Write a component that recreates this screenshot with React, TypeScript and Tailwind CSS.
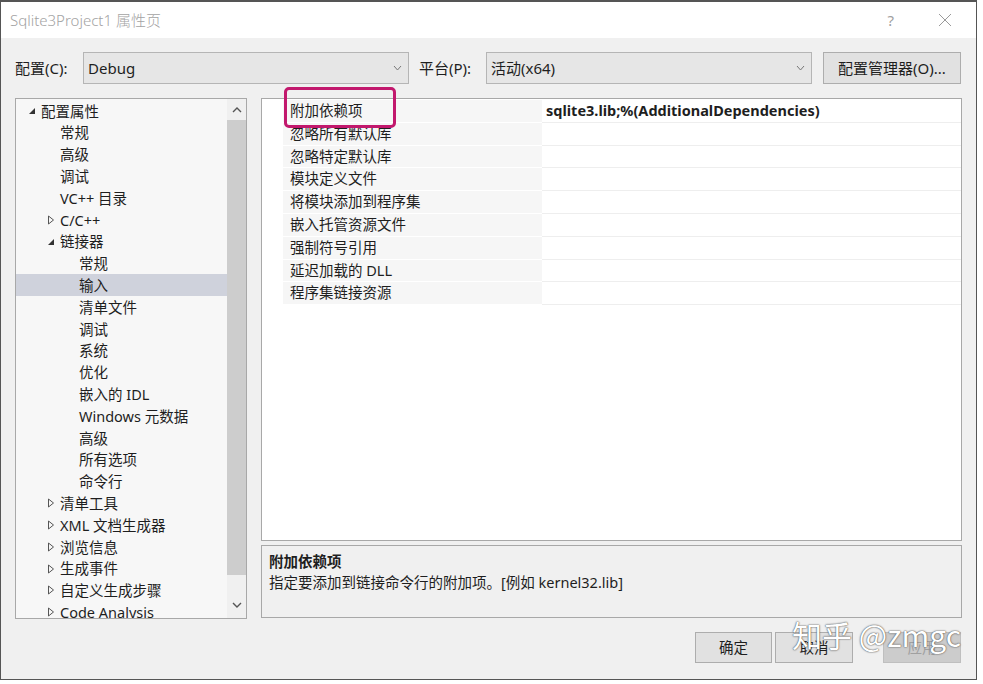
import React from "react";

const font = "font-['Segoe_UI','Noto_Sans','Noto_Sans_CJK_SC',sans-serif]";

type Node = { label: string; level: number; arrow?: "open" | "closed"; selected?: boolean };

const tree: Node[] = [
  { label: "配置属性", level: 0, arrow: "open" },
  { label: "常规", level: 1 },
  { label: "高级", level: 1 },
  { label: "调试", level: 1 },
  { label: "VC++ 目录", level: 1 },
  { label: "C/C++", level: 1, arrow: "closed" },
  { label: "链接器", level: 1, arrow: "open" },
  { label: "常规", level: 2 },
  { label: "输入", level: 2, selected: true },
  { label: "清单文件", level: 2 },
  { label: "调试", level: 2 },
  { label: "系统", level: 2 },
  { label: "优化", level: 2 },
  { label: "嵌入的 IDL", level: 2 },
  { label: "Windows 元数据", level: 2 },
  { label: "高级", level: 2 },
  { label: "所有选项", level: 2 },
  { label: "命令行", level: 2 },
  { label: "清单工具", level: 1, arrow: "closed" },
  { label: "XML 文档生成器", level: 1, arrow: "closed" },
  { label: "浏览信息", level: 1, arrow: "closed" },
  { label: "生成事件", level: 1, arrow: "closed" },
  { label: "自定义生成步骤", level: 1, arrow: "closed" },
  { label: "Code Analysis", level: 1, arrow: "closed" },
];

const props = [
  "附加依赖项",
  "忽略所有默认库",
  "忽略特定默认库",
  "模块定义文件",
  "将模块添加到程序集",
  "嵌入托管资源文件",
  "强制符号引用",
  "延迟加载的 DLL",
  "程序集链接资源",
];

const indent = ["pl-[12px]", "pl-[31px]", "pl-[50px]"];

function Arrow({ kind }: { kind?: "open" | "closed" }) {
  if (!kind) return <span className="w-[13px] shrink-0" />;
  return (
    <span className="w-[13px] shrink-0 flex items-center">
      {kind === "open" ? (
        <svg width="8" height="8" viewBox="0 0 8 8">
          <path d="M7 1 L7 7 L1 7 Z" fill="#333" />
        </svg>
      ) : (
        <svg width="8" height="10" viewBox="0 0 8 10">
          <path d="M1.5 1 L6.5 5 L1.5 9 Z" fill="none" stroke="#555" strokeWidth="1" />
        </svg>
      )}
    </span>
  );
}

function Chevron({ up }: { up?: boolean }) {
  return (
    <svg width="10" height="6" viewBox="0 0 10 6">
      <path d={up ? "M1 5 L5 1 L9 5" : "M1 1 L5 5 L9 1"} fill="none" stroke="#555" strokeWidth="1.4" />
    </svg>
  );
}

function Combo({ value, width }: { value: string; width: string }) {
  return (
    <div className={`${width} h-[32px] border border-[#b5b5b5] bg-[#e6e6e6] flex items-center justify-between pl-[4px] pr-[6px]`}>
      <span className="text-[15px] text-[#1e1e1e]">{value}</span>
      <svg width="9" height="6" viewBox="0 0 9 6">
        <path d="M1 1 L4.5 5 L8 1" fill="none" stroke="#777" strokeWidth="1" />
      </svg>
    </div>
  );
}

export default function App() {
  return (
    <div className={`w-[983px] h-[684px] bg-white relative overflow-hidden ${font}`}>
      <div className="w-[977px] h-[680px] border border-[#555] border-t-2 bg-[#f0f0f0] flex flex-col">
        {/* title bar */}
        <div className="h-[36px] bg-white flex items-center justify-between pl-[9px] pr-[24px] shrink-0">
          <span className="text-[15px] font-light text-[#a3a3a3]">Sqlite3Project1 属性页</span>
          <div className="flex items-center gap-[44px] text-[#a0a0a0]">
            <span className="text-[15px]">?</span>
            <svg width="14" height="14" viewBox="0 0 14 14">
              <path d="M1 1 L13 13 M13 1 L1 13" stroke="#9a9a9a" strokeWidth="1" />
            </svg>
          </div>
        </div>

        <div className="flex flex-col px-[14px]">
          {/* toolbar */}
          <div className="mt-[14px] h-[32px] flex items-center text-[15px] text-[#1e1e1e]">
            <span className="w-[68px]">配置(C):</span>
            <Combo value="Debug" width="w-[326px]" />
            <span className="ml-[10px] w-[67px]">平台(P):</span>
            <Combo value="活动(x64)" width="w-[326px]" />
            <button className="ml-[11px] w-[138px] h-[32px] border border-[#adadad] bg-[#e1e1e1] text-[15px] text-[#1e1e1e]">
              配置管理器(O)...
            </button>
          </div>

          {/* main */}
          <div className="mt-[14px] flex gap-[14px]">
            {/* tree */}
            <div className="w-[232px] h-[521px] border border-[#a8a8a8] bg-[#f7f7f7] flex overflow-hidden">
              <div className="flex-1 flex flex-col pt-[1px] overflow-hidden">
                {tree.map((n, i) => (
                  <div
                    key={i}
                    className={`h-[21.8px] shrink-0 flex items-center ${indent[n.level]} text-[14.5px] text-[#1e1e1e] ${n.selected ? "bg-[#cfd2dc]" : ""}`}
                  >
                    <Arrow kind={n.arrow} />
                    <span className="whitespace-nowrap leading-none">{n.label}</span>
                  </div>
                ))}
              </div>
              <div className="w-[19px] flex flex-col items-center bg-[#f0f0f0]">
                <div className="h-[21px] flex items-center">
                  <Chevron up />
                </div>
                <div className="w-[19px] h-[455px] bg-[#cdcdcd]" />
                <div className="flex-1 flex items-end pb-[10px]">
                  <Chevron />
                </div>
              </div>
            </div>

            {/* right column */}
            <div className="w-[701px] flex flex-col">
              <div className="h-[443px] border border-[#a8a8a8] bg-white relative pt-[1px]">
                {props.map((p, i) => (
                  <div key={i} className="h-[22.8px] flex">
                    <div className="w-[21px]" />
                    <div className="w-[259px] bg-[#f6f6f6] border-b border-white flex items-center pl-[7px] text-[14.5px] text-[#1e1e1e]">
                      {p}
                    </div>
                    <div className="flex-1 border-b border-[#eeeeee] flex items-center pl-[4px] text-[14.5px] font-bold text-[#1e1e1e]">
                      {i === 0 ? "sqlite3.lib;%(AdditionalDependencies)" : ""}
                    </div>
                  </div>
                ))}
                {/* annotation */}
                <div className="absolute left-[22px] top-[-12px] w-[112px] h-[41px] border-[3px] border-[#c2186d] rounded-[5px]" />
              </div>
              <div className="mt-[4px] h-[73px] border border-[#a8a8a8] bg-[#f0f0f0] px-[7px] pt-[5px] text-[14.5px] text-[#1e1e1e]">
                <div className="font-bold leading-[20px]">附加依赖项</div>
                <div className="leading-[22px]">指定要添加到链接命令行的附加项。[例如 kernel32.lib]</div>
              </div>
            </div>
          </div>

          {/* buttons */}
          <div className="mt-[13px] flex justify-end gap-[3px] pr-[1px] relative">
            <button className="w-[77px] h-[31px] border border-[#adadad] bg-[#e1e1e1] text-[14.5px] text-[#1e1e1e]">确定</button>
            <button className="w-[78px] h-[31px] border border-[#adadad] bg-[#e1e1e1] text-[14.5px] text-[#1e1e1e]">取消</button>
            <button className="ml-[27px] w-[78px] h-[31px] border border-[#bfbfbf] bg-[#cccccc] text-[14.5px] text-[#a0a0a0]">应用</button>
            <span className="absolute right-[1px] top-[-20px] text-[30px] text-white whitespace-nowrap [text-shadow:0_0_1px_#444,0_0_2px_#666] font-['Noto_Sans_CJK_SC',sans-serif]">
              知乎 @zmgc
            </span>
          </div>
        </div>
      </div>
    </div>
  );
}
